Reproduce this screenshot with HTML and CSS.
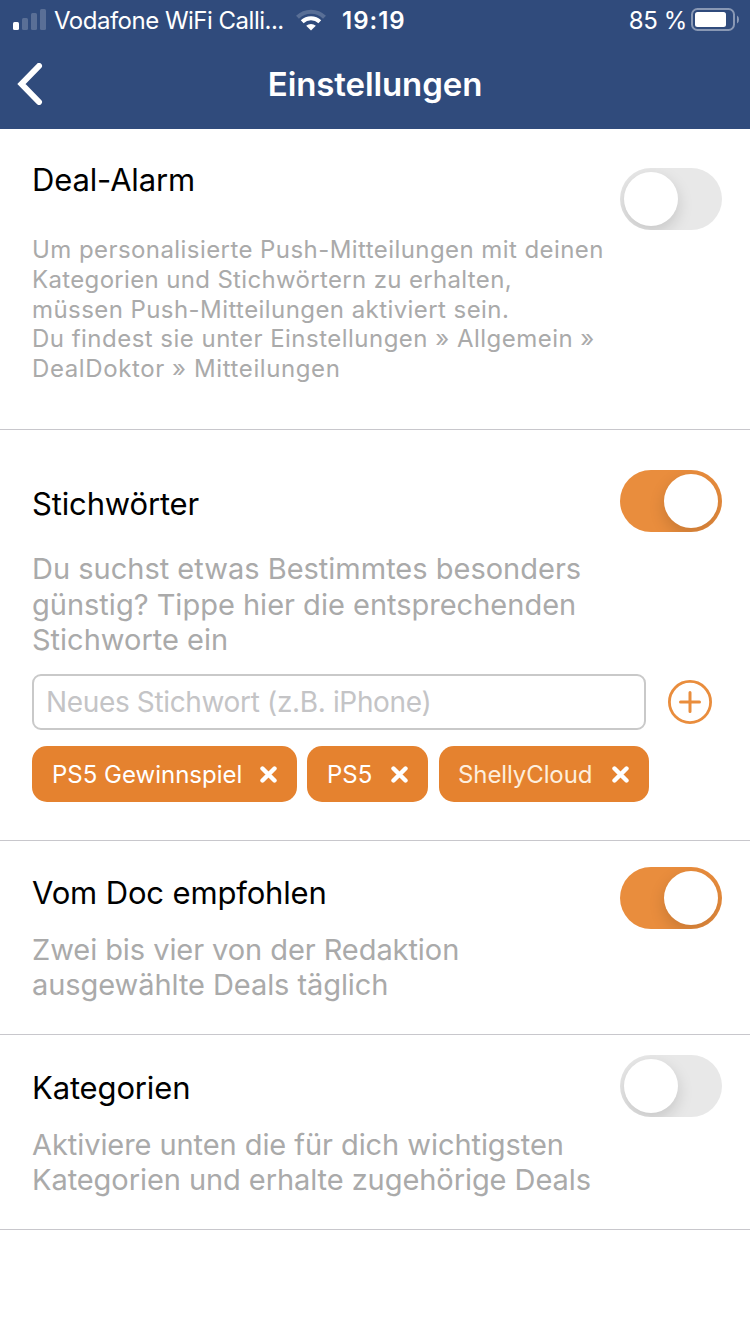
FILE: index.html
```html
<!DOCTYPE html>
<html lang="de">
<head>
<meta charset="utf-8">
<title>Einstellungen</title>
<link rel="stylesheet" href="styles.css">
</head>
<body>
<header class="header">
  <div class="status">
    <svg class="signal" width="34" height="22" viewBox="0 0 34 22" fill="#fff">
      <rect x="0" y="13" width="6" height="8" rx="1.5"/>
      <g opacity=".2"><rect x="9" y="9" width="6" height="12" rx="1.5"/><rect x="18" y="4" width="6" height="17" rx="1.5"/><rect x="27" y="0" width="6" height="21" rx="1.5"/></g>
    </svg>
    <span class="carrier">Vodafone WiFi Calli...</span>
    <svg class="wifi" width="30" height="22" viewBox="0 0 30 22" fill="none" stroke="#fff">
      <path d="M1.5 8.2A19.5 19.5 0 0 1 28.500 8.200" stroke-width="4.200" opacity=".2"/>
      <path d="M6.200 12.800A12.600 12.600 0 0 1 23.800 12.800" stroke-width="4"/>
      <path d="M15 21.500L10.200 16.800A7.200 7.200 0 0 1 19.800 16.800Z" fill="#fff" stroke="none"/>
    </svg>
    <span class="time">19:19</span>
    <span class="percent">85 %</span>
    <svg class="battery" width="48" height="23" viewBox="0 0 48 23">
      <rect x="1" y="1" width="42" height="21" rx="5.500" fill="none" stroke="#fff" stroke-opacity=".43" stroke-width="2"/>
      <rect x="4" y="4" width="31" height="15" rx="2.500" fill="#fff"/>
      <path d="M46 7.500q2 1.200 2 4t-2 4z" fill="#fff" opacity=".45"/>
    </svg>
  </div>
  <nav class="navbar">
    <svg class="back" width="26" height="42" viewBox="0 0 26 42" fill="none" stroke="#fff" stroke-width="6" stroke-linecap="round" stroke-linejoin="miter"><path d="M22 3L4.500 21L22 39"/></svg>
    <h1 class="page-title">Einstellungen</h1>
  </nav>
</header>
<main>
  <section class="section alarm">
    <div class="copy">
      <h2 class="title">Deal-Alarm</h2>
      <p class="hint">Um personalisierte Push-Mitteilungen mit deinen<br><span class="snug">Kategorien und Stichwörtern zu erhalten,</span><br>müssen Push-Mitteilungen aktiviert sein.<br><span class="loose">Du findest sie unter Einstellungen » Allgemein »</span><br><span class="wide">DealDoktor » Mitteilungen</span></p>
    </div>
    <div class="switch"><i class="knob"></i></div>
  </section>
  <section class="section keywords">
    <div class="copy">
      <h2 class="title">Stichwörter</h2>
      <p class="text">Du suchst etwas Bestimmtes besonders<br>günstig? Tippe hier die entsprechenden<br>Stichworte ein</p>
    </div>
    <div class="switch on"><i class="knob"></i></div>
    <div class="entry">
      <div class="field">Neues Stichwort (z.B. iPhone)</div>
      <svg class="add" width="44" height="44" viewBox="0 0 44 44" fill="none" stroke="#e98d3d"><circle cx="22" cy="22" r="20.600" stroke-width="2.800"/><path d="M12.500 22h19M22 12.500v19" stroke-width="3" stroke-linecap="round"/></svg>
    </div>
    <div class="tags">
      <div class="tag tag-a"><span>PS5 Gewinnspiel</span><svg class="x" width="17" height="17" viewBox="0 0 17 17"><path d="M2.500 2.500l12 12M14.500 2.500l-12 12"/></svg></div>
      <div class="tag tag-b"><span>PS5</span><svg class="x" width="17" height="17" viewBox="0 0 17 17"><path d="M2.500 2.500l12 12M14.500 2.500l-12 12"/></svg></div>
      <div class="tag tag-c"><span>ShellyCloud</span><svg class="x" width="17" height="17" viewBox="0 0 17 17"><path d="M2.500 2.500l12 12M14.500 2.500l-12 12"/></svg></div>
    </div>
  </section>
  <section class="section doc">
    <div class="copy">
      <h2 class="title">Vom Doc empfohlen</h2>
      <p class="text">Zwei bis vier von der Redaktion<br>ausgewählte Deals täglich</p>
    </div>
    <div class="switch on"><i class="knob"></i></div>
  </section>
  <section class="section categories">
    <div class="copy">
      <h2 class="title">Kategorien</h2>
      <p class="text">Aktiviere unten die für dich wichtigsten<br>Kategorien und erhalte zugehörige Deals</p>
    </div>
    <div class="switch"><i class="knob"></i></div>
  </section>
</main>
</body>
</html>
```
FILE: styles.css
```css
* { box-sizing: border-box; margin: 0; padding: 0; }
body { background: #fff; color: #000; font-family: Inter, "Liberation Sans", sans-serif; height: 1334px; overflow: hidden; }
svg { display: block; flex: none; }
.header { background: #304b7c; height: 129px; color: #fff; }
.status { display: flex; height: 40px; padding: 0 11px 0 13px; font-size: 24px; line-height: 42px; white-space: nowrap; }
.signal { margin-top: 9px; }
.carrier { width: 243px; margin-left: 7px; letter-spacing: -.5px; }
.wifi { margin-top: 9px; margin-left: -1px; }
.time { margin-left: 16px; font-weight: 600; letter-spacing: 1px; }
.percent { margin-left: auto; margin-right: 4px; letter-spacing: -.4px; }
.battery { margin-top: 8px; }
.navbar { display: grid; grid-template-columns: 80px 1fr 80px; height: 89px; align-items: start; }
.back { margin: 23px 0 0 17px; }
.page-title { margin-top: 24px; font-size: 33px; line-height: 40px; font-weight: 600; letter-spacing: -.1px; text-align: center; }
.section { display: flex; flex-wrap: wrap; align-items: flex-start; align-content: flex-start; border-bottom: 1px solid #c8c7cc; padding: 0 28px 0 32px; }
.copy { width: 588px; white-space: nowrap; }
.title { font-size: 31px; line-height: 38px; font-weight: 400; letter-spacing: -.15px; }
.hint { margin-top: 36px; font-size: 24px; line-height: 29.8px; color: #aaa; letter-spacing: .43px; }
.snug { letter-spacing: .34px; }
.loose { letter-spacing: .48px; }
.wide { letter-spacing: .6px; }
.text { font-size: 29px; line-height: 35.5px; color: #aaa; letter-spacing: 0; }
.alarm { height: 301px; }
.alarm .copy { padding-top: 32px; }
.alarm .switch { margin-top: 39px; }
.keywords { height: 411px; }
.keywords .copy { padding-top: 55px; height: 244px; }
.keywords .text { margin-top: 28px; }
.keywords .switch { margin-top: 40px; }
.doc { height: 194px; }
.doc .copy { padding-top: 33px; }
.doc .switch { margin-top: 26px; }
.doc .text, .categories .text { margin-top: 20px; line-height: 35px; letter-spacing: -.07px; }
.categories { height: 195px; }
.categories .copy { padding-top: 34px; }
.categories .switch { margin-top: 20px; }
.switch { display: flex; width: 102px; height: 62px; padding: 4px; border-radius: 31px; background: #e8e8e8; overflow: hidden; }
.switch.on { background: #e98d3d; justify-content: flex-end; }
.knob { width: 54px; height: 54px; border-radius: 50%; background: #fff; box-shadow: 0 6px 16px rgba(0,0,0,.15); }
.entry { display: flex; width: 100%; gap: 22px; align-items: center; }
.field { width: 614px; height: 56px; border: 2px solid #c9c9c9; border-radius: 9px; padding: 0 12px; font-size: 28px; line-height: 52px; letter-spacing: -.35px; color: #c4c4c6; }
.tags { display: flex; margin-top: 16px; }
.tag { display: flex; align-items: center; justify-content: space-between; height: 56px; border-radius: 15px; background: #e5822f; color: #fff; font-size: 24px; padding: 0 20px; white-space: nowrap; letter-spacing: 0; }
.tag-a { width: 265px; margin-right: 10px; }
.tag-b { width: 121px; margin-right: 11px; }
.tag-c { width: 210px; padding-left: 19px; letter-spacing: -.1px; }
.tag-c span { color: #fdeedd; }
.x { fill: none; stroke: #fff; stroke-width: 4.4; stroke-linecap: round; }
```
